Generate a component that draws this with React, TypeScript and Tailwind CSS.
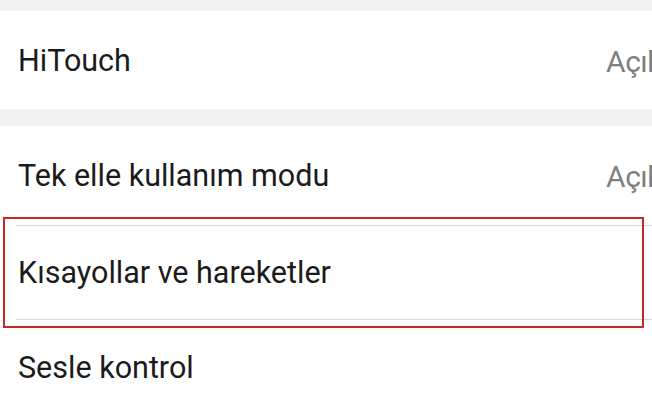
const Row = ({ label, value, h }: { label: string; value?: string; h: string }) => {
  return (
    <div className={`flex items-center justify-between pl-[18px] ${h}`}>
      <span className="text-[30.5px] leading-none text-[#1b1b1b]">{label}</span>
      {value && (
        <span className="mr-[-10px] shrink-0 text-[30px] leading-none tracking-[-0.5px] text-[#7f7f7f]">
          {value}
        </span>
      )}
    </div>
  );
};

const Divider = () => <div className="ml-[16px] h-px bg-[#d9d9d9]" />;

const App = () => {
  return (
    <div
      className="relative h-[400px] w-[652px] overflow-hidden bg-[#f2f2f2] pt-[11px]"
      style={{ fontFamily: "Roboto, 'Liberation Sans', sans-serif" }}
    >
      <div className="bg-white">
        <Row label="HiTouch" value="Açık" h="h-[98px] pt-[3px]" />
      </div>

      <div className="mt-[17px] bg-white">
        <Row label="Tek elle kullanım modu" value="Açık" h="h-[99px] pt-[2px]" />
        <Divider />
        <Row label="Kısayollar ve hareketler" h="h-[93px] pt-[1px]" />
        <Divider />
        <Row label="Sesle kontrol" h="h-[96px]" />
      </div>

      {/* highlight box */}
      <div className="absolute left-[3px] top-[217px] h-[111px] w-[641px] border-2 border-[#c62828]" />
    </div>
  );
};

export default App;
